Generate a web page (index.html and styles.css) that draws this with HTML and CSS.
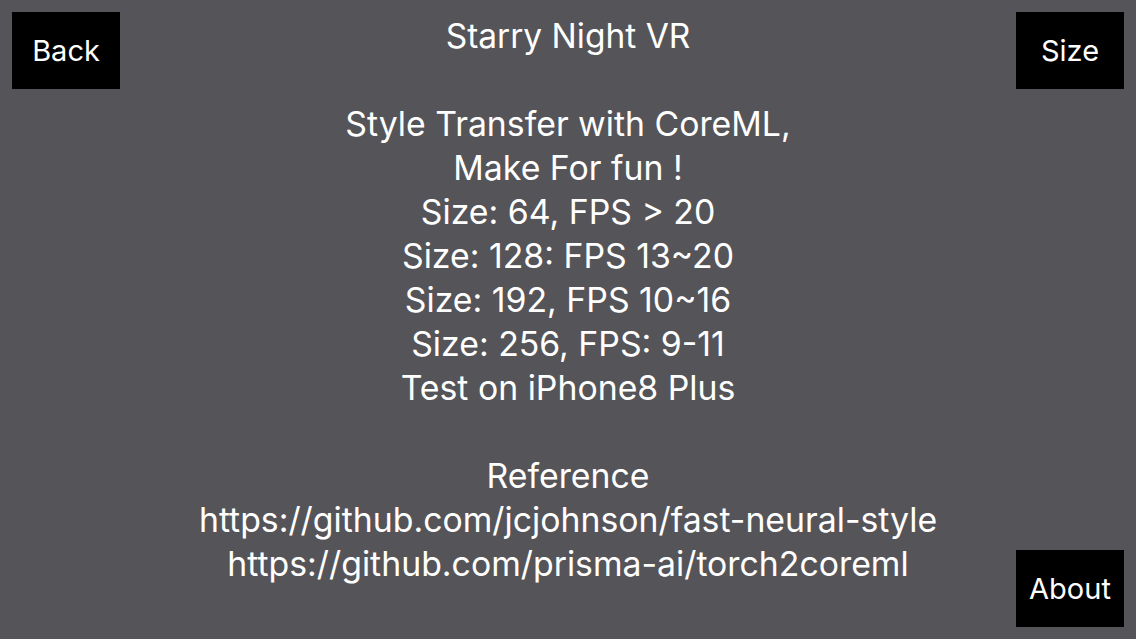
FILE: index.html
```html
<!DOCTYPE html>
<html lang="en">
<head>
<meta charset="utf-8">
<title>Starry Night VR</title>
<link rel="stylesheet" href="styles.css">
</head>
<body>
<div class="screen">
  <div class="side side-left">
    <div class="btn">Back</div>
  </div>
  <div class="info">
    <p class="title">Starry Night VR</p>
    <p class="blank">&nbsp;</p>
    <p>Style Transfer with CoreML,</p>
    <p>Make For fun !</p>
    <p>Size: 64, FPS &gt; 20</p>
    <p>Size: 128: FPS 13~20</p>
    <p>Size: 192, FPS 10~16</p>
    <p>Size: 256, FPS: 9-11</p>
    <p>Test on iPhone8 Plus</p>
    <p class="blank">&nbsp;</p>
    <p>Reference</p>
    <p>https://github.com/jcjohnson/fast-neural-style</p>
    <p>https://github.com/prisma-ai/torch2coreml</p>
  </div>
  <div class="side side-right">
    <div class="btn">Size</div>
    <div class="btn">About</div>
  </div>
</div>
</body>
</html>
```
FILE: styles.css
```css
html, body {
  margin: 0;
  padding: 0;
  background: #555459;
}
.screen {
  width: 1136px;
  height: 639px;
  box-sizing: border-box;
  padding: 12px;
  display: grid;
  grid-template-columns: 108px 1fr 108px;
  font-family: Inter, "Open Sans", sans-serif;
  color: #ffffff;
}
.side {
  display: flex;
  flex-direction: column;
}
.side-right {
  justify-content: space-between;
}
.btn {
  width: 108px;
  height: 77px;
  background: #000000;
  display: flex;
  align-items: center;
  justify-content: center;
  font-size: 29px;
  color: #ffffff;
}
.info {
  padding-top: 2px;
  text-align: center;
  font-size: 33.8px;
  line-height: 44px;
}
.info p {
  margin: 0;
  white-space: nowrap;
}
.title {
  font-size: 33.5px;
}
```
